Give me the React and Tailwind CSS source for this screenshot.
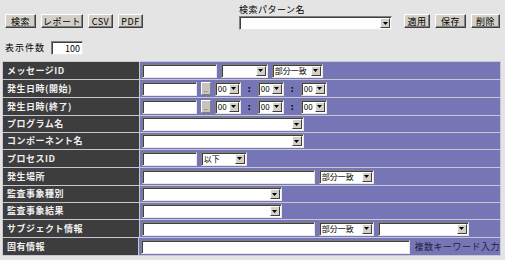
import React from "react";

const font = { fontFamily: '"Noto Sans CJK JP", "Noto Sans", sans-serif' };

const Btn = ({ label, w }) => (
  <button
    className={`h-[14px] ${w} bg-[#d4d0c8] border border-t-white border-l-white border-b-[#404040] border-r-[#404040] shadow-[inset_-1px_-1px_0_#808080] text-[9px] leading-none text-black tracking-[0.5px] whitespace-nowrap flex items-center justify-center`}
  >
    {label}
  </button>
);

const Input = ({ w, value = "", right }) => (
  <div
    className={`h-[14px] ${w} bg-white border border-t-[#808080] border-l-[#808080] border-b-[#e8e8e8] border-r-[#e8e8e8] shadow-[inset_1px_1px_0_#404040] text-[9px] leading-none text-black flex items-center ${right ? "justify-end pr-[2px]" : "pl-[2px]"}`}
  >
    {value}
  </div>
);

const Select = ({ w, value = "" }) => (
  <div
    className={`h-[14px] ${w} bg-white border border-t-[#808080] border-l-[#808080] border-b-[#e8e8e8] border-r-[#e8e8e8] shadow-[inset_1px_1px_0_#404040] flex items-stretch`}
  >
    <div className="flex-1 min-w-0 text-[8px] leading-none text-black flex items-center pl-[2px] overflow-hidden whitespace-nowrap">
      {value}
    </div>
    <div className="w-[10px] shrink-0 my-[1px] mr-[1px] bg-[#d4d0c8] border border-t-white border-l-white border-b-[#404040] border-r-[#404040] flex items-center justify-center">
      <svg width="5" height="3" viewBox="0 0 5 3">
        <path d="M0 0h5L2.5 3z" fill="#000" />
      </svg>
    </div>
  </div>
);

const Colon = () => <span className="text-[9px] text-black font-bold w-[9px] text-center">:</span>;

const Dots = () => (
  <div className="h-[13px] w-[10px] bg-[#c8c4bc] border border-t-white border-l-white border-b-[#808080] border-r-[#808080] text-[7px] leading-[9px] text-[#505050] flex items-end justify-center">
    ..
  </div>
);

const Row = ({ label, h = "h-[17px]", children }) => (
  <div className={`flex gap-px ${h}`}>
    <div className="w-[136px] bg-[#3d3d3d] text-[#f0f0f0] text-[9px] font-bold tracking-[0.5px] flex items-center pl-[4px] whitespace-nowrap">
      {label}
    </div>
    <div className="w-[361px] bg-[#7676b6] flex items-center gap-[4px] pl-[2px]">{children}</div>
  </div>
);

export default function App() {
  return (
    <div className="w-[505px] h-[260px] bg-[#e4e4e4] relative" style={font}>
      <div className="flex items-start pt-[4px]">
        <div className="flex gap-[5px] pl-[5px] pt-[10px]">
          <Btn label="検索" w="w-[31px]" />
          <Btn label="レポート" w="w-[42px]" />
          <Btn label="CSV" w="w-[25px]" />
          <Btn label="PDF" w="w-[25px]" />
        </div>
        <div className="ml-[96px] flex flex-col">
          <div className="text-[9px] leading-[12px] text-black tracking-[0.5px] h-[12px]">検索パターン名</div>
          <Select w="w-[153px]" />
        </div>
        <div className="flex gap-[5px] ml-[12px] pt-[10px]">
          <Btn label="適用" w="w-[26px]" />
          <Btn label="保存" w="w-[31px]" />
          <Btn label="削除" w="w-[29px]" />
        </div>
      </div>
      <div className="flex items-center gap-[6px] pl-[5px] mt-[11px]">
        <span className="text-[9px] text-black tracking-[1px]">表示件数</span>
        <Input w="w-[32px]" value="100" right />
      </div>
      <div className="mt-[6px] ml-[2px] w-[499px] bg-[#c8c8d4] p-px flex flex-col gap-px">
        <Row label="メッセージID">
          <Input w="w-[75px]" />
          <Select w="w-[47px]" />
          <Select w="w-[51px]" value="部分一致" />
        </Row>
        <Row label="発生日時(開始)">
          <Input w="w-[55px]" />
          <Dots />
          <Select w="w-[26px]" value="00" />
          <Colon />
          <Select w="w-[26px]" value="00" />
          <Colon />
          <Select w="w-[26px]" value="00" />
        </Row>
        <Row label="発生日時(終了)">
          <Input w="w-[55px]" />
          <Dots />
          <Select w="w-[26px]" value="00" />
          <Colon />
          <Select w="w-[26px]" value="00" />
          <Colon />
          <Select w="w-[26px]" value="00" />
        </Row>
        <Row label="プログラム名" h="h-[16px]">
          <Select w="w-[162px]" />
        </Row>
        <Row label="コンポーネント名" h="h-[16px]">
          <Select w="w-[162px]" />
        </Row>
        <Row label="プロセスID">
          <Input w="w-[55px]" />
          <Select w="w-[46px]" value="以下" />
        </Row>
        <Row label="発生場所">
          <Input w="w-[173px]" />
          <Select w="w-[55px]" value="部分一致" />
        </Row>
        <Row label="監査事象種別" h="h-[16px]">
          <Select w="w-[140px]" />
        </Row>
        <Row label="監査事象結果" h="h-[16px]">
          <Select w="w-[140px]" />
        </Row>
        <Row label="サブジェクト情報">
          <Input w="w-[173px]" />
          <Select w="w-[55px]" value="部分一致" />
          <Select w="w-[91px]" />
        </Row>
        <Row label="固有情報">
          <Input w="w-[270px]" />
          <span className="text-[9px] text-[#202040] tracking-[0.5px] whitespace-nowrap">複数キーワード入力</span>
        </Row>
      </div>
    </div>
  );
}
